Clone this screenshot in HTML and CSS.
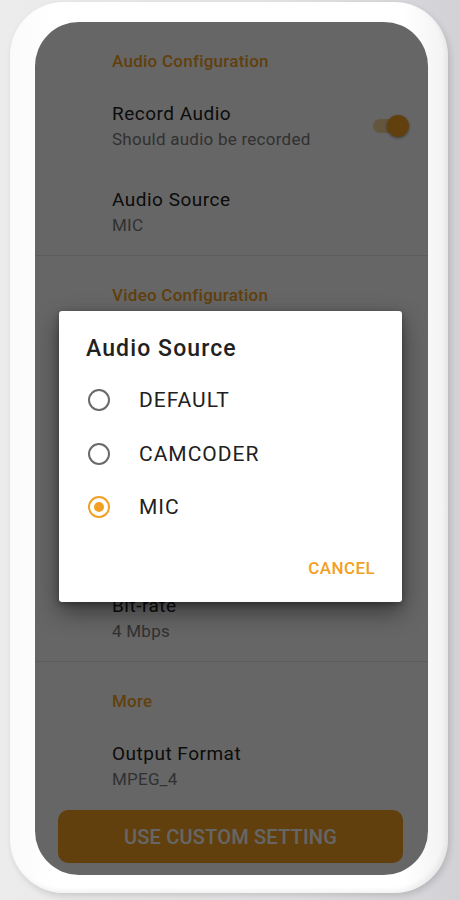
FILE: index.html
```html
<!DOCTYPE html>
<html>
	<head>
		<meta charset="UTF-8">
		<title>Settings</title>
		<link rel="stylesheet" href="styles.css">
	</head>
	<body>
		<div class="device">
			<div class="screen">
				<div class="prefs">
					<section class="group">
						<h3 class="group-title">Audio Configuration</h3>
						<div class="pref">
							<div class="pref-text">
								<div class="pref-title">Record Audio</div>
								<div class="pref-summary">Should audio be recorded</div>
							</div>
							<span class="switch on"><span class="thumb"></span></span>
						</div>
						<div class="pref">
							<div class="pref-text">
								<div class="pref-title">Audio Source</div>
								<div class="pref-summary">MIC</div>
							</div>
						</div>
					</section>
					<section class="group">
						<h3 class="group-title">Video Configuration</h3>
						<div class="pref">
							<div class="pref-text">
								<div class="pref-title">Resolution</div>
								<div class="pref-summary">1920 x 1080</div>
							</div>
						</div>
						<div class="pref">
							<div class="pref-text">
								<div class="pref-title">Frame Rate</div>
								<div class="pref-summary">30 fps</div>
							</div>
						</div>
						<div class="pref">
							<div class="pref-text">
								<div class="pref-title">Video Encoder</div>
								<div class="pref-summary">H264</div>
							</div>
						</div>
						<div class="pref">
							<div class="pref-text">
								<div class="pref-title">Bit-rate</div>
								<div class="pref-summary">4 Mbps</div>
							</div>
						</div>
					</section>
					<section class="group">
						<h3 class="group-title">More</h3>
						<div class="pref">
							<div class="pref-text">
								<div class="pref-title">Output Format</div>
								<div class="pref-summary">MPEG_4</div>
							</div>
						</div>
					</section>
				</div>
				<button class="cta">USE CUSTOM SETTING</button>

				<!-- dialog over the list -->
				<div class="scrim">
					<div class="dialog">
						<h2 class="dialog-title">Audio Source</h2>
						<ul class="options">
							<li class="option"><span class="radio"></span>DEFAULT</li>
							<li class="option"><span class="radio"></span>CAMCODER</li>
							<li class="option checked"><span class="radio"></span>MIC</li>
						</ul>
						<div class="actions">
							<button class="text-btn">CANCEL</button>
						</div>
					</div>
				</div>
			</div>
		</div>
	</body>
</html>
```

FILE: styles.css
```css
*{margin: 0;padding: 0;box-sizing: border-box;}
body{height: 900px;overflow: hidden;background: linear-gradient(90deg, #ececec 0%, #e4e4e6 60%, #d2d2d6 100%);font-family: Roboto, "Noto Sans", sans-serif;}
li{list-style: none;}
button{font-family: inherit;border: none;background: none;cursor: pointer;}

.device{width: 438px;height: 891px;margin: 2px 0 0 10px;padding: 20px 20px 18px 25px;border-radius: 54px;background: linear-gradient(90deg, #fafafa 0%, #fff 10%, #fff 90%, #f2f2f2 100%);box-shadow: 2px 3px 6px rgba(0,0,0,0.14), inset -3px -3px 4px rgba(0,0,0,0.05);}
.screen{position: relative;height: 853px;overflow: hidden;border-radius: 44px;background: #fff;display: flex;flex-direction: column;}

.prefs{flex: 1;overflow: hidden;}
.group{border-bottom: 1px solid #e6e6e6;}
.group:last-child{border-bottom: none;}
.group-title{padding: 28px 0 11px 77px;font-size: 17px;line-height: 22px;font-weight: 500;letter-spacing: 0.25px;color: #f2a024;}
.pref{display: flex;align-items: center;justify-content: space-between;padding: 18px 19px 18px 77px;}
.pref-title{font-size: 19px;line-height: 26px;letter-spacing: 0.5px;color: #212121;}
.pref-summary{font-size: 17px;line-height: 24px;letter-spacing: 0.25px;color: #7a7a7a;}

.switch{position: relative;width: 36px;height: 22px;}
.switch::before{content: "";position: absolute;left: 0;right: 4px;top: 4px;height: 14px;border-radius: 7px;background: rgba(242,160,36,0.45);}
.switch .thumb{position: absolute;right: 0;top: 0;width: 22px;height: 22px;border-radius: 50%;background: #f2a024;box-shadow: 0 1px 3px rgba(0,0,0,0.4);}

.cta{height: 53px;margin: 0 25px 12px 23px;border-radius: 10px;background: #f2a024;color: #fff;font-size: 20px;font-weight: 500;letter-spacing: 0.2px;}

.scrim{position: absolute;top: 0;left: 0;right: 0;bottom: 0;background: rgba(0,0,0,0.6);display: flex;align-items: center;justify-content: center;}
.dialog{width: 343px;margin: 16px 2px 0 0;padding: 24px 0 16px;border-radius: 3px;background: #fff;box-shadow: 0 10px 24px rgba(0,0,0,0.45), 0 2px 6px rgba(0,0,0,0.3);}
.dialog-title{padding: 0 27px;margin-bottom: 10px;font-size: 23px;line-height: 28px;font-weight: 500;letter-spacing: 1.1px;color: #212121;}
.option{display: flex;align-items: center;height: 53.5px;padding-left: 29px;font-size: 21px;letter-spacing: 1px;color: #212121;}
.radio{width: 22px;height: 22px;margin-right: 29px;border: 2px solid #6a6a6a;border-radius: 50%;display: flex;align-items: center;justify-content: center;}
.checked .radio{border-color: #f2a024;}
.checked .radio::after{content: "";width: 10px;height: 10px;border-radius: 50%;background: #f2a024;}
.actions{display: flex;justify-content: flex-end;margin-top: 16px;padding-right: 27px;}
.text-btn{height: 36px;font-size: 17px;font-weight: 500;letter-spacing: 0.4px;color: #f2a024;}
```
